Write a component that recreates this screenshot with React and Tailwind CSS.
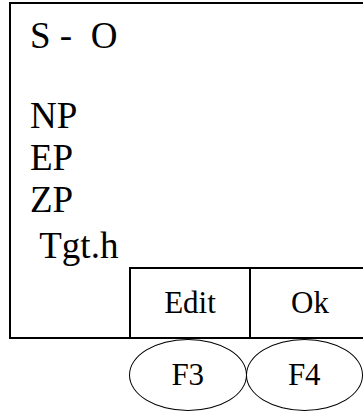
export default function App() {
  return (
    <div className="w-[363px] h-[412px] overflow-hidden bg-white text-black font-['Liberation_Serif','Times_New_Roman',serif]">
      <div className="ml-[9px] mt-[2px] w-[380px] border-l-2 border-t-2 border-b-2 border-black flex flex-col">
        <div className="pl-[19px] pt-[11px] text-[37px] leading-[42px]">
          <div>S -&nbsp; O</div>
          <div className="mt-[38px]">NP</div>
          <div>EP</div>
          <div>ZP</div>
          <div className="mt-[4px]">&nbsp;Tgt.h</div>
        </div>
        <div className="ml-[118px] flex text-[31px]">
          <div className="w-[120px] h-[70px] border-l-2 border-t-2 border-black flex items-center justify-center">
            Edit
          </div>
          <div className="w-[120px] h-[70px] border-l-2 border-t-2 border-black flex items-center justify-center">
            Ok
          </div>
        </div>
      </div>
      <div className="ml-[129px] flex text-[31px]">
        <div className="w-[121px] h-[72px] rounded-[50%] border-[1.5px] border-black flex items-center justify-center">
          F3
        </div>
        <div className="-ml-[1px] w-[121px] h-[72px] rounded-[50%] border-[1.5px] border-black flex items-center justify-center">
          F4
        </div>
      </div>
    </div>
  );
}
